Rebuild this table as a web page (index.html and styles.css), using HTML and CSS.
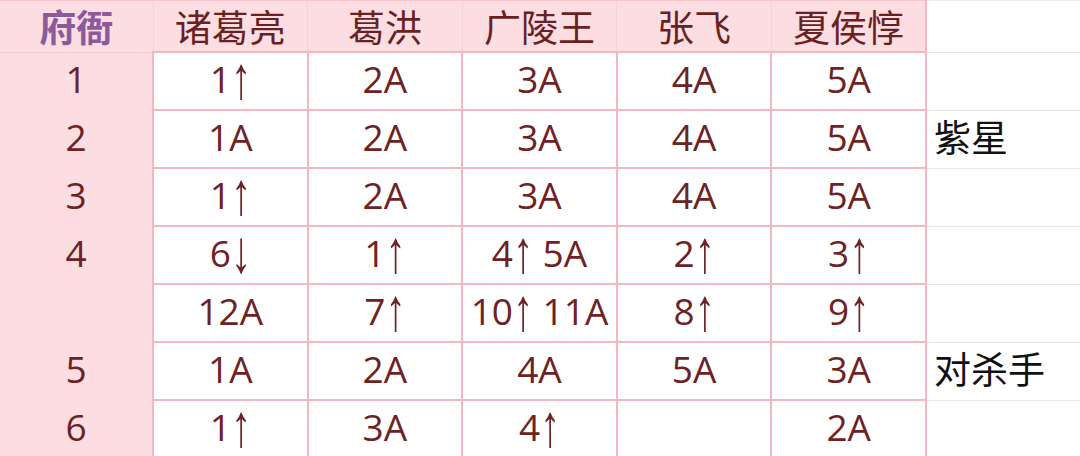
FILE: index.html
```html
<!DOCTYPE html>
<html lang="zh">
<head>
<meta charset="utf-8">
<link rel="stylesheet" href="styles.css">
</head>
<body>
<table class="grid">
  <colgroup>
    <col class="c-first">
    <col class="c-data"><col class="c-data"><col class="c-data"><col class="c-data"><col class="c-data">
    <col class="c-note">
  </colgroup>
  <thead>
    <tr class="head">
      <th class="h-first">府衙</th>
      <th>诸葛亮</th>
      <th>葛洪</th>
      <th>广陵王</th>
      <th>张飞</th>
      <th class="h-last">夏侯惇</th>
      <th class="note"></th>
    </tr>
  </thead>
  <tbody>
    <tr><td class="first">1</td><td>1<span class="arr">↑</span></td><td>2A</td><td>3A</td><td>4A</td><td>5A</td><td class="note"></td></tr>
    <tr><td class="first">2</td><td>1A</td><td>2A</td><td>3A</td><td>4A</td><td>5A</td><td class="note">紫星</td></tr>
    <tr><td class="first">3</td><td>1<span class="arr">↑</span></td><td>2A</td><td>3A</td><td>4A</td><td>5A</td><td class="note"></td></tr>
    <tr><td class="first">4</td><td>6<span class="arr">↓</span></td><td>1<span class="arr">↑</span></td><td>4<span class="arr">↑</span> 5A</td><td>2<span class="arr">↑</span></td><td>3<span class="arr">↑</span></td><td class="note"></td></tr>
    <tr><td class="first"></td><td>12A</td><td>7<span class="arr">↑</span></td><td>10<span class="arr">↑</span> 11A</td><td>8<span class="arr">↑</span></td><td>9<span class="arr">↑</span></td><td class="note"></td></tr>
    <tr><td class="first">5</td><td>1A</td><td>2A</td><td>4A</td><td>5A</td><td>3A</td><td class="note">对杀手</td></tr>
    <tr><td class="first">6</td><td>1<span class="arr">↑</span></td><td>3A</td><td>4<span class="arr">↑</span></td><td></td><td>2A</td><td class="note"></td></tr>
  </tbody>
</table>
</body>
</html>
```
FILE: styles.css
```css
html, body {
  margin: 0;
  padding: 0;
  background: #ffffff;
  overflow: hidden;
}

.grid {
  border-collapse: collapse;
  table-layout: fixed;
  width: 1080px;
  font-family: "Open Sans", "Noto Sans CJK SC", sans-serif;
  font-size: 37px;
  color: #6e2224;
}

.c-first { width: 153px; }
.c-data { width: 154.6px; }
.c-note { width: auto; }

.head th {
  height: 50px;
  padding: 0;
  font-weight: normal;
  background: #fcdde2;
  border-top: 1px solid #f5c6ce;
  border-bottom: 1px solid #f3c3cb;
  text-align: center;
  font-family: "Noto Sans CJK SC", sans-serif;
  line-height: 1;
  color: #6a1f22;
}

.head th + th { border-left: 1px solid #f8d0d7; }

.head .h-first {
  font-weight: bold;
  color: #8a5a9c;
}

.head .h-last { border-right: 2px solid #f5b8c3; }

.head .note {
  background: #ffffff;
  border-top: 1px solid #ececec;
  border-bottom: 1px solid #e8e8e8;
  border-left: 2px solid #f5b8c3;
}

tbody td {
  height: 51px;
  padding: 0 0 5px;
  text-align: center;
  border: 2px solid #f5b8c3;
  line-height: 1;
  white-space: nowrap;
}

.arr {
  display: inline-block;
  font-family: "Liberation Sans", "DejaVu Sans", sans-serif;
  font-size: 40px;
  line-height: 0.7;
  transform: scaleY(1.5);
  transform-origin: 50% 67%;
}

tbody td.first {
  background: #fcdde2;
  border-top: none;
  border-bottom: none;
  border-left: none;
}

tbody td.note {
  border: none;
  border-left: 2px solid #f5b8c3;
  border-bottom: 1px solid #e8e8e8;
  text-align: left;
  padding-left: 7px;
  color: #111111;
  font-family: "Noto Sans CJK SC", sans-serif;
}
```
